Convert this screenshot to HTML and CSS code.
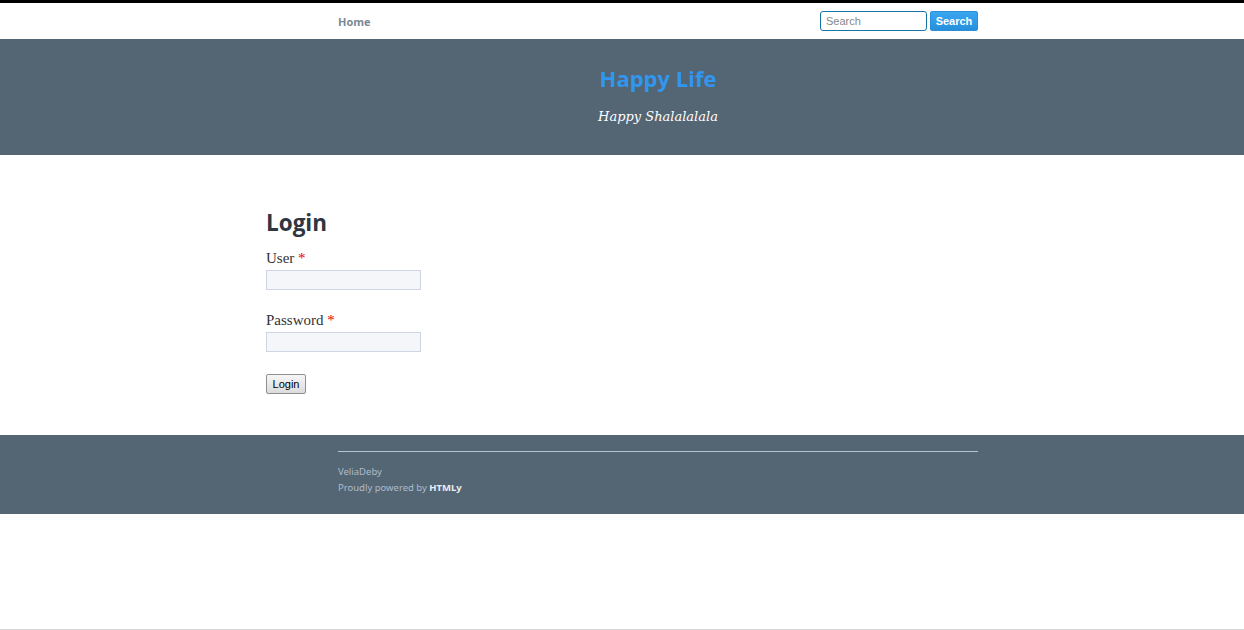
FILE: index.html
```html
<!DOCTYPE html>
<html>
<head>
<meta charset="utf-8">
<title>Login - Happy Life</title>
<link rel="stylesheet" href="styles.css">
</head>
<body>
<div class="topbar"></div>
<nav class="nav">
  <div class="nav-inner">
    <a class="nav-link" href="#">Home</a>
    <form class="search">
      <input class="search-input" type="text" placeholder="Search">
      <button class="search-btn" type="button">Search</button>
    </form>
  </div>
</nav>
<header class="hero">
  <div class="hero-inner">
    <h1 class="site-title">Happy Life</h1>
    <p class="tagline">Happy Shalalalala</p>
  </div>
</header>
<main class="main">
  <div class="main-inner">
    <h2 class="login-title">Login</h2>
    <form class="login-form">
      <label class="field-label">User <span class="req">*</span></label>
      <input class="field-input" type="text">
      <label class="field-label">Password <span class="req">*</span></label>
      <input class="field-input" type="password">
      <button class="login-btn" type="button">Login</button>
    </form>
  </div>
</main>
<footer class="footer">
  <div class="footer-inner">
    <div class="footer-line"></div>
    <p class="footer-text">VeliaDeby</p>
    <p class="footer-text">Proudly powered by <strong class="brand">HTMLy</strong></p>
  </div>
</footer>
<div class="page-end"></div>
</body>
</html>
```

FILE: styles.css
```css
* { box-sizing: border-box; }
html, body { margin: 0; padding: 0; }
body {
  background: #fff;
  font-family: "Liberation Serif", serif;
  width: 1244px;
  height: 630px;
  position: relative;
}
.topbar { height: 3px; background: #000; }
.nav { height: 36px; background: #fff; }
.nav-inner {
  width: 640px;
  margin-left: 338px;
  height: 36px;
  display: flex;
  align-items: center;
  justify-content: space-between;
}
.nav-link {
  font-family: "Open Sans", sans-serif;
  font-weight: 700;
  font-size: 11px;
  color: #7b8994;
  text-decoration: none;
  margin-top: 1px;
}
.search { display: flex; gap: 3px; align-items: center; margin: 0; }
.search-input {
  width: 107px;
  height: 20px;
  border: 1px solid #1674a6;
  border-radius: 3px;
  padding: 0 5px;
  font-family: "Liberation Sans", sans-serif;
  font-size: 11px;
  color: #333;
  outline: none;
}
.search-input::placeholder { color: #888; }
.search-btn {
  width: 48px;
  height: 20px;
  border: 1px solid #2c8fd6;
  border-radius: 2px;
  background: linear-gradient(#3aa6f0, #2690dd);
  color: #fff;
  font-family: "Liberation Sans", sans-serif;
  font-weight: 700;
  font-size: 11px;
  padding: 0;
}
.hero { background: #546574; height: 116px; }
.hero-inner {
  width: 640px;
  margin-left: 338px;
  text-align: center;
  padding-top: 24px;
}
.site-title {
  margin: 0;
  font-family: "Open Sans", sans-serif;
  font-weight: 700;
  font-size: 22px;
  line-height: 30px;
  color: #3196f0;
}
.tagline {
  margin: 15px 0 0;
  font-family: "DejaVu Serif", serif;
  font-style: italic;
  font-size: 13px;
  line-height: 18px;
  color: #fff;
}
.main { height: 280px; }
.main-inner {
  width: 784px;
  margin-left: 266px;
  padding-top: 52px;
}
.login-title {
  margin: 0 0 10px;
  font-family: "Open Sans", sans-serif;
  font-weight: 700;
  font-size: 22.5px;
  line-height: 32px;
  color: #2f3640;
}
.login-form { display: flex; flex-direction: column; align-items: flex-start; }
.field-label {
  font-family: "Liberation Serif", serif;
  font-size: 15px;
  line-height: 18px;
  color: #333;
  margin-bottom: 3px;
}
.req { color: #e00; }
.field-input {
  width: 155px;
  height: 20px;
  background: #f4f6f9;
  border: 1px solid #cdd6e2;
  margin: 0 0 21px;
  padding: 0 4px;
}
.login-btn {
  width: 40px;
  height: 20px;
  padding: 0;
  margin-top: 1px;
  font-family: "Liberation Sans", sans-serif;
  font-size: 11px;
  color: #000;
  background: linear-gradient(#f6f6f6, #dcdcdc);
  border: 1px solid #8f8f8f;
  border-radius: 2px;
}
.footer { background: #546574; height: 79px; }
.footer-inner {
  width: 640px;
  margin-left: 338px;
  padding-top: 16px;
}
.footer-line { height: 1px; background: #b6c4d2; margin-bottom: 12px; }
.footer-text {
  margin: 0;
  font-family: "Noto Sans", sans-serif;
  font-size: 9.5px;
  line-height: 16px;
  color: #aebccb;
}
.brand { color: #e8eef4; font-weight: 700; }
.page-end {
  position: absolute;
  left: 0;
  right: 0;
  bottom: 0;
  height: 1px;
  background: #d6d6d6;
}
```
